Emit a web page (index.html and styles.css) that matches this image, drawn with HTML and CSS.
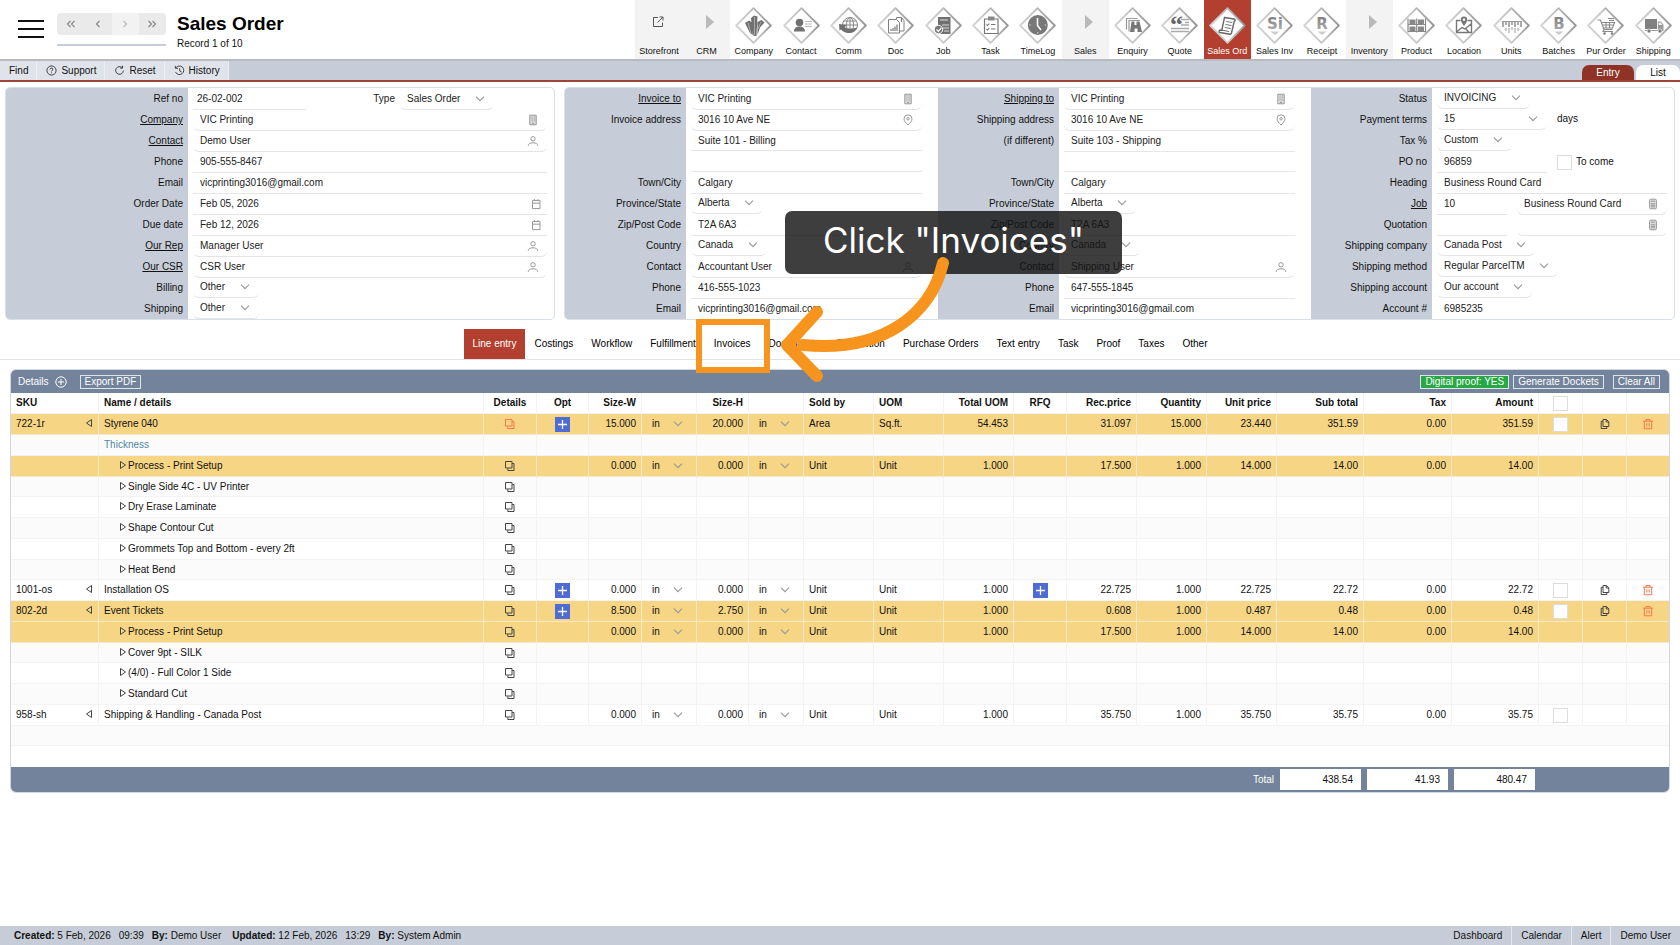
FILE: index.html
```html
<!DOCTYPE html>
<html lang="en">
<head>
<meta charset="utf-8">
<meta name="viewport" content="width=device-width, initial-scale=1">
<title>Sales Order</title>
<link rel="stylesheet" href="styles.css">
</head>
<body>
<svg class="defs" aria-hidden="true">
  <defs>
    <linearGradient id="edge" x1="0" y1="0.6" x2="1" y2="0.3"><stop offset="0" stop-color="#d4d4d4"/><stop offset="0.5" stop-color="#c2c2c2"/><stop offset="1" stop-color="#8f8f8f"/></linearGradient>
    <linearGradient id="mark" x1="0" y1="0" x2="0" y2="1"><stop offset="0" stop-color="#7a7a7a"/><stop offset="1" stop-color="#b4b4b4"/></linearGradient>
    <symbol id="diamond" viewBox="0 0 37 37"><path d="M18.5 1.2 35.8 18.5 18.5 35.8 1.2 18.5z" fill="#fff" stroke="url(#edge)" stroke-width="1.8" stroke-linejoin="round"/></symbol>
    <symbol id="building" viewBox="0 0 12 12"><path d="M2.8 1.2h6.4v9.600H2.800z" fill="#ddd" stroke="currentColor" stroke-width="1"/><path d="M4.400 3h1.200M6.600 3h1.200M4.400 5h1.200M6.600 5h1.200M4.400 7h1.200M6.600 7h1.200M5 9.400h2" stroke="currentColor" stroke-width="1"/></symbol>
    <symbol id="person" viewBox="0 0 12 12"><circle cx="6" cy="3.800" r="2.200" fill="none" stroke="currentColor"/><path d="M1.200 10.800c0-2 1.900-3 4.800-3s4.800 1 4.800 3" fill="none" stroke="currentColor"/></symbol>
    <symbol id="calendar" viewBox="0 0 12 12"><path d="M2.500 2.600h7.500v8H2.500zM2.500 5.200h7.500M4.400 1v2M8 1v2" fill="none" stroke="currentColor"/></symbol>
    <symbol id="pin" viewBox="0 0 12 12"><path d="M6 11C3.500 8.600 2 6.900 2 4.800a4 4 0 0 1 8 0C10 6.900 8.500 8.600 6 11z" fill="none" stroke="currentColor"/><circle cx="6" cy="4.800" r="1.200" fill="none" stroke="currentColor"/></symbol>
    <symbol id="clip" viewBox="0 0 12 12"><rect x="2.600" y="1.200" width="6.800" height="9.600" rx="1.200" fill="#ddd" stroke="currentColor"/><path d="M4 3.200h4M4 5.800h4M4 7.300h4M4 8.800h4" fill="none" stroke="currentColor"/></symbol>
    <symbol id="layers" viewBox="0 0 12 12"><path d="M1.500 1.500h6.500v6.500H1.500z" fill="none" stroke="currentColor" stroke-linejoin="round"/><path d="M10 3.500v7H3.800V8.500M8.200 3.500H10" fill="none" stroke="currentColor" stroke-linejoin="round"/></symbol>
    <symbol id="copy" viewBox="0 0 12 12"><path d="M4 1.500h3.500L9.800 3.800V8.500H4zM7.200 1.500V4h2.600" fill="none" stroke="currentColor" stroke-linejoin="round"/><path d="M4 3.300H2.200v7.200H7.800v-2" fill="none" stroke="currentColor" stroke-linejoin="round"/></symbol>
    <symbol id="trash" viewBox="0 0 12 12"><path d="M1 3.200h10M4 3V1.500h4V3M2.300 3.200v7.600h7.400V3.200M4.800 5.300v3.200M7.200 5.300v3.200" fill="none" stroke="currentColor" stroke-linejoin="round"/></symbol>
    <symbol id="tri-left" viewBox="0 0 8 10"><path d="M6.500 1.500v7L1.500 5z" fill="none" stroke="currentColor" stroke-linejoin="round"/></symbol>
    <symbol id="tri-right" viewBox="0 0 8 10"><path d="M1.500 1.500v7l5-3.500z" fill="none" stroke="currentColor" stroke-linejoin="round"/></symbol>
    <symbol id="plus" viewBox="0 0 15 15"><path d="M7.500 3v9M3 7.500h9" stroke="currentColor" stroke-width="1.300"/></symbol>
    <symbol id="play" viewBox="0 0 8 14"><path d="M0 0v14l8-7z" fill="#b9b9b9"/></symbol>
  </defs>
</svg>

<header class="top">
  <button class="menu" type="button" aria-label="Menu"><span></span><span></span><span></span></button>
  <div class="pager">
    <div class="pager-buttons">
      <button type="button" aria-label="First"><svg viewBox="0 0 12 10"><path d="M5.500 2 2.500 5l3 3M9.500 2l-3 3 3 3"/></svg></button>
      <button type="button" aria-label="Previous"><svg viewBox="0 0 12 10"><path d="M7.500 2l-3 3 3 3"/></svg></button>
      <button type="button" aria-label="Next" class="faded"><svg viewBox="0 0 12 10"><path d="M4.500 2l3 3-3 3"/></svg></button>
      <button type="button" aria-label="Last"><svg viewBox="0 0 12 10"><path d="M2.500 2l3 3-3 3M6.500 2l3 3-3 3"/></svg></button>
    </div>
    <div class="pager-line"></div>
  </div>
  <div class="heading"><h1>Sales Order</h1><p>Record 1 of 10</p></div>
  <nav class="modules" aria-label="Modules">
    <a href="#" class="group"><svg class="glyph" viewBox="0 0 12 12"><path d="M6 1.500H1.500v9h9V6.500M7.500 1H11v3.500M11 1 5.500 6.500" fill="none" stroke="#555"/></svg><span>Storefront</span></a>
    <a href="#" class="group"><svg class="arrow"><use href="#play"/></svg><span>CRM</span></a>
    <a href="#"><svg viewBox="0 0 37 37"><use href="#diamond"/><path d="M10 16l4-2.500 3 2L18 28l-3-2zM16 11l3-2.500 3.500 1L21.500 29h-3L16.500 16zM22.500 15l4-2 3 2.500-4.500 5L22.500 28z" fill="#707070"/><path d="M13 15.500l3 11M19.500 10v18M26 15l-3 7" stroke="#aaa" fill="none"/></svg><span>Company</span></a>
    <a href="#"><svg viewBox="0 0 37 37"><use href="#diamond"/><circle cx="16.500" cy="15.500" r="3.800" fill="#707070"/><path d="M11 24.500c0-3.500 2-4 4-5h3c2 1 4 1.500 4 5z" fill="#707070"/><path d="M22 14.500h7M22 17h7M22 19.500h7" stroke="#bbb"/></svg><span>Contact</span></a>
    <a href="#"><svg viewBox="0 0 37 37"><use href="#diamond"/><g fill="none" stroke="#888"><circle cx="20" cy="18" r="7.500"/><ellipse cx="20" cy="18" rx="3.500" ry="7.500"/><path d="M20 10.500v15M12.500 18h15M13.800 14h12.400M13.800 22h12.400"/></g><path d="M9 17l8 1-2.300 2c2.500 2.500 7.500 2.500 12.500.500-3 7-13 7-16 2l-1.700 1z" fill="#707070"/></svg><span>Comm</span></a>
    <a href="#"><svg viewBox="0 0 37 37"><use href="#diamond"/><g fill="#fff" stroke="#808080"><path d="M19.500 10.500h5l2.500 3V24h-8z"/><path d="M11.500 12.500h8l3 3V26h-11z"/></g><path d="M14 24v-2M16 24v-3M18 24v-4.500M20 24v-6.500M24.500 11v4" stroke="#777" stroke-width="1.200"/></svg><span>Doc</span></a>
    <a href="#"><svg viewBox="0 0 37 37"><use href="#diamond"/><path d="M13 10h12.500v17H13z" fill="#707070"/><path d="M15 13h8M17 18h7M18 21h6M19 24h5" stroke="#ddd"/><circle cx="13.500" cy="22.500" r="4.200" fill="#777" stroke="#fff"/><path d="M11.500 22.500l1.800 1.800 3-3.300" fill="none" stroke="#fff" stroke-width="1.200"/></svg><span>Job</span></a>
    <a href="#"><svg viewBox="0 0 37 37"><use href="#diamond"/><path d="M12.500 12h13.500v14.500H12.500z" fill="none" stroke="#777" stroke-width="1.200"/><path d="M16 9.500h6.500v4H16z" fill="#888"/><path d="M14.500 17.500l1 1 1.800-2M14.500 22l1 1 1.800-2M19 17.500h4.500M19 22h4.500" fill="none" stroke="#777" stroke-width="1.100"/></svg><span>Task</span></a>
    <a href="#"><svg viewBox="0 0 37 37"><use href="#diamond"/><circle cx="18.800" cy="18" r="10" fill="#787878"/><path d="M18.500 11v7.500l3.500 4.500" fill="none" stroke="#fff" stroke-width="1.500"/><path d="M10.300 18h1.500M25.700 18h1.500M18.800 26.500V25" stroke="#ddd"/></svg><span>TimeLog</span></a>
    <a href="#" class="group"><svg class="arrow"><use href="#play"/></svg><span>Sales</span></a>
    <a href="#"><svg viewBox="0 0 37 37"><use href="#diamond"/><path d="M12.500 22.500v-11h11M15 24.500V13.500h11" fill="none" stroke="#999" stroke-width="1.200"/><path d="M17.500 14.500h3v3.500h2v-3.500h3l2.500 10.500h-4.500v-3.500h-3V25H16z" fill="#777"/></svg><span>Enquiry</span></a>
    <a href="#"><svg viewBox="0 0 37 37"><use href="#diamond"/><text x="9" y="26" class="quote-mark">“</text><path d="M20 12.500h8M24 15.500h4M20 18h8M10 21.500h18M10 24.500h18" stroke="#aaa" stroke-width="1.300"/></svg><span>Quote</span></a>
    <a href="#" class="active"><svg viewBox="0 0 37 37"><use href="#diamond"/><path d="M15.500 10.500l9.500 1.500c1.500.3 1.500 2 .3 2.200L22.500 26c-.5 1.500-2 1.500-3 1L11 25.500c-1.500-.5-1-2.500.500-2.500l1.300.2z" fill="#fff" stroke="#666" stroke-width="1.400"/><path d="M17.300 14.500l6 1M16.500 17.500l6 1M15.700 20.500l6 1" stroke="#777" stroke-width="1.100"/><path d="M12.500 23l7.500 1.500" stroke="#666"/></svg><span>Sales Ord</span></a>
    <a href="#"><svg viewBox="0 0 37 37"><use href="#diamond"/><text x="19" y="22" class="letter">Si</text><path d="M14.500 24.500h9L19 28z" fill="#ccc"/></svg><span>Sales Inv</span></a>
    <a href="#"><svg viewBox="0 0 37 37"><use href="#diamond"/><text x="19" y="22" class="letter">R</text><path d="M14.500 24.500h9L19 28z" fill="#ccc"/></svg><span>Receipt</span></a>
    <a href="#" class="group"><svg class="arrow"><use href="#play"/></svg><span>Inventory</span></a>
    <a href="#"><svg viewBox="0 0 37 37"><use href="#diamond"/><path d="M10 11.500v14M18.700 11.500v14M27.500 11.500v14M10 17.500h17.500M10 24.500h17.500" stroke="#888" stroke-width="1.200"/><path d="M11.500 12.500h6v4.500h-6zM20 12.500h6v4.500h-6zM11.500 19.500h6v4.500h-6zM20 19.500h6v4.500h-6z" fill="#888"/></svg><span>Product</span></a>
    <a href="#"><svg viewBox="0 0 37 37"><use href="#diamond"/><path d="M15.500 13.500h-4V25.500h15V13.500h-4M12 24.500l5-4 3 1.500 6-5M21 22l3 3.500" fill="none" stroke="#777" stroke-width="1.400"/><path d="M19 19c-2.200-3-3.200-4.500-3.200-6.200a3.200 3.200 0 0 1 6.400 0c0 1.700-1 3.200-3.200 6.200z" fill="#777"/><circle cx="19" cy="12.700" r="1.200" fill="#fff"/></svg><span>Location</span></a>
    <a href="#"><svg viewBox="0 0 37 37"><use href="#diamond"/><path d="M9 14.500h20" stroke="#999"/><path d="M10 15v5M13 15v3M16 15v5M19 15v3M22 15v5M25 15v3M28 15v5" stroke="#888" stroke-width="1.400"/><path d="M13 21v3M16 21v5M19 20v3M22 21v5M25 21v3" stroke="#b0b0b0" stroke-width="1.300"/></svg><span>Units</span></a>
    <a href="#"><svg viewBox="0 0 37 37"><use href="#diamond"/><text x="19" y="22" class="letter">B</text><path d="M14.500 24.500h9L19 28z" fill="#ccc"/></svg><span>Batches</span></a>
    <a href="#"><svg viewBox="0 0 37 37"><use href="#diamond"/><path d="M10.500 13h3l3.500 9.500h8.500M14.500 15.500h13l-2 5.500h-9M17 22.500l-1 2h10M16 18h10.500M19 15.500v5.500M22.500 15.500v5.500M21 11.500h6M22 13.500h5" fill="none" stroke="#888" stroke-width="1.100"/><circle cx="17.500" cy="26.500" r="1.200" fill="#777"/><circle cx="25" cy="26.500" r="1.200" fill="#777"/></svg><span>Pur Order</span></a>
    <a href="#"><svg viewBox="0 0 37 37"><use href="#diamond"/><path d="M10 12h12v10H10z" fill="#808080"/><path d="M22.800 14.500h3.200l2.500 3.500V23h-5.700z" fill="#999"/><path d="M23.700 15.500h2l1.700 2.500h-3.700z" fill="#eee"/><path d="M10 23.500h18.500" stroke="#999"/><circle cx="14" cy="24" r="2" fill="#777" stroke="#fff" stroke-width=".6"/><circle cx="25" cy="24" r="2" fill="#777" stroke="#fff" stroke-width=".6"/></svg><span>Shipping</span></a>
  </nav>
</header>

<div class="toolbar">
  <button type="button">Find</button>
  <button type="button"><svg viewBox="0 0 12 12"><circle cx="6" cy="6" r="5"/><path d="M4.500 4.800c0-2 3-2 3-.2C7.500 5.700 6 5.700 6 7M6 8.200v1"/></svg>Support</button>
  <button type="button"><svg viewBox="0 0 12 12"><path d="M9 3a4.200 4.200 0 1 0 1.200 3.200M9.300.8V3.400H6.700"/></svg>Reset</button>
  <button type="button"><svg viewBox="0 0 12 12"><path d="M2 3.200a4.700 4.700 0 1 1-.3 4.500M1.500 1v2.600h2.800M6.200 3.500V6.500l2.200 1.200"/></svg>History</button>
  <div class="views"><a href="#" class="on">Entry</a><a href="#">List</a></div>
</div>

<main>
  <div class="panels">
    <section class="panel wide-label">
      <div class="col">
        <div class="row"><label class="name" for="ref">Ref no</label><div class="value split"><span class="line ref"><input id="ref" value="26-02-002"></span><span class="pair"><label for="type">Type</label><select id="type"><option>Sales Order</option></select></span></div></div>
        <div class="row"><a class="name" href="#" id="l-co">Company</a><div class="value"><span class="card"><input aria-labelledby="l-co" value="VIC Printing"><svg class="ic"><use href="#building"/></svg></span></div></div>
        <div class="row"><a class="name" href="#" id="l-ct">Contact</a><div class="value"><span class="card"><input aria-labelledby="l-ct" value="Demo User"><svg class="ic"><use href="#person"/></svg></span></div></div>
        <div class="row"><label class="name" for="ph">Phone</label><div class="value"><span class="line"><input id="ph" value="905-555-8467"></span></div></div>
        <div class="row"><label class="name" for="em">Email</label><div class="value"><span class="line"><input id="em" value="vicprinting3016@gmail.com"></span></div></div>
        <div class="row"><label class="name" for="od">Order Date</label><div class="value"><span class="line"><input id="od" value="Feb 05, 2026"><svg class="ic"><use href="#calendar"/></svg></span></div></div>
        <div class="row"><label class="name" for="dd">Due date</label><div class="value"><span class="line"><input id="dd" value="Feb 12, 2026"><svg class="ic"><use href="#calendar"/></svg></span></div></div>
        <div class="row"><a class="name" href="#" id="l-rep">Our Rep</a><div class="value"><span class="card"><input aria-labelledby="l-rep" value="Manager User"><svg class="ic"><use href="#person"/></svg></span></div></div>
        <div class="row"><a class="name" href="#" id="l-csr">Our CSR</a><div class="value"><span class="card"><input aria-labelledby="l-csr" value="CSR User"><svg class="ic"><use href="#person"/></svg></span></div></div>
        <div class="row"><label class="name" for="bi">Billing</label><div class="value"><select id="bi"><option>Other</option></select></div></div>
        <div class="row"><label class="name" for="sh">Shipping</label><div class="value"><select id="sh"><option>Other</option></select></div></div>
      </div>
    </section>

    <section class="panel three">
      <div class="col inset">
        <div class="row"><a class="name" href="#" id="l-inv">Invoice to</a><div class="value"><span class="card"><input aria-labelledby="l-inv" value="VIC Printing"><svg class="ic"><use href="#building"/></svg></span></div></div>
        <div class="row"><label class="name" for="ia">Invoice address</label><div class="value"><span class="card"><input id="ia" value="3016 10 Ave NE"><svg class="ic"><use href="#pin"/></svg></span></div></div>
        <div class="row"><span class="name"></span><div class="value"><span class="line"><input aria-label="Invoice address line 2" value="Suite 101 - Billing"></span></div></div>
        <div class="row"><span class="name"></span><div class="value"><span class="line"><input aria-label="Invoice address line 3"></span></div></div>
        <div class="row"><label class="name" for="ic">Town/City</label><div class="value"><span class="line"><input id="ic" value="Calgary"></span></div></div>
        <div class="row"><label class="name" for="ip">Province/State</label><div class="value"><select id="ip"><option>Alberta</option></select></div></div>
        <div class="row"><label class="name" for="iz">Zip/Post Code</label><div class="value"><span class="line"><input id="iz" value="T2A 6A3"></span></div></div>
        <div class="row"><label class="name" for="in">Country</label><div class="value"><select id="in"><option>Canada</option></select></div></div>
        <div class="row"><label class="name" for="ict">Contact</label><div class="value"><span class="card"><input id="ict" value="Accountant User"><svg class="ic"><use href="#person"/></svg></span></div></div>
        <div class="row"><label class="name" for="iph">Phone</label><div class="value"><span class="line"><input id="iph" value="416-555-1023"></span></div></div>
        <div class="row"><label class="name" for="ie">Email</label><div class="value"><span class="line"><input id="ie" value="vicprinting3016@gmail.com"></span></div></div>
      </div>
      <div class="col inset">
        <div class="row"><a class="name" href="#" id="l-shp">Shipping to</a><div class="value"><span class="card"><input aria-labelledby="l-shp" value="VIC Printing"><svg class="ic"><use href="#building"/></svg></span></div></div>
        <div class="row"><label class="name" for="sa">Shipping address</label><div class="value"><span class="card"><input id="sa" value="3016 10 Ave NE"><svg class="ic"><use href="#pin"/></svg></span></div></div>
        <div class="row"><label class="name" for="sa2">(if different)</label><div class="value"><span class="line"><input id="sa2" value="Suite 103 - Shipping"></span></div></div>
        <div class="row"><span class="name"></span><div class="value"><span class="line"><input aria-label="Shipping address line 3"></span></div></div>
        <div class="row"><label class="name" for="sc">Town/City</label><div class="value"><span class="line"><input id="sc" value="Calgary"></span></div></div>
        <div class="row"><label class="name" for="sp">Province/State</label><div class="value"><select id="sp"><option>Alberta</option></select></div></div>
        <div class="row"><label class="name" for="sz">Zip/Post Code</label><div class="value"><span class="line"><input id="sz" value="T2A 6A3"></span></div></div>
        <div class="row"><label class="name" for="sn">Country</label><div class="value"><select id="sn"><option>Canada</option></select></div></div>
        <div class="row"><label class="name" for="sct">Contact</label><div class="value"><span class="card"><input id="sct" value="Shipping User"><svg class="ic"><use href="#person"/></svg></span></div></div>
        <div class="row"><label class="name" for="sph">Phone</label><div class="value"><span class="line"><input id="sph" value="647-555-1845"></span></div></div>
        <div class="row"><label class="name" for="se">Email</label><div class="value"><span class="line"><input id="se" value="vicprinting3016@gmail.com"></span></div></div>
      </div>
      <div class="col">
        <div class="row"><label class="name" for="st">Status</label><div class="value"><select id="st"><option>INVOICING</option></select></div></div>
        <div class="row"><label class="name" for="pt">Payment terms</label><div class="value"><select id="pt" class="medium"><option>15</option></select><span class="after">days</span></div></div>
        <div class="row"><label class="name" for="tx">Tax %</label><div class="value"><select id="tx"><option>Custom</option></select></div></div>
        <div class="row"><label class="name" for="po">PO no</label><div class="value"><span class="line medium"><input id="po" value="96859"></span><label class="after tick"><input type="checkbox">To come</label></div></div>
        <div class="row"><label class="name" for="he">Heading</label><div class="value"><span class="line"><input id="he" value="Business Round Card"></span></div></div>
        <div class="row"><a class="name" href="#" id="l-job">Job</a><div class="value gap"><span class="line small"><input aria-labelledby="l-job" value="10"></span><span class="card"><input aria-label="Job name" value="Business Round Card"><svg class="ic"><use href="#clip"/></svg></span></div></div>
        <div class="row"><label class="name" for="qu">Quotation</label><div class="value gap"><span class="line small"><input id="qu"></span><span class="card"><input aria-label="Quotation name"><svg class="ic"><use href="#clip"/></svg></span></div></div>
        <div class="row"><label class="name" for="sco">Shipping company</label><div class="value"><select id="sco"><option>Canada Post</option></select></div></div>
        <div class="row"><label class="name" for="sm">Shipping method</label><div class="value"><select id="sm"><option>Regular ParcelTM</option></select></div></div>
        <div class="row"><label class="name" for="sac">Shipping account</label><div class="value"><select id="sac"><option>Our account</option></select></div></div>
        <div class="row"><label class="name" for="ac">Account #</label><div class="value"><span class="line"><input id="ac" value="6985235"></span></div></div>
      </div>
    </section>
  </div>

  <nav class="tabs" aria-label="Sections">
    <a href="#" class="on">Line entry</a><a href="#">Costings</a><a href="#">Workflow</a><a href="#">Fulfillment</a><a href="#">Invoices</a><a href="#">Documents</a><a href="#">Production</a><a href="#">Purchase Orders</a><a href="#">Text entry</a><a href="#">Task</a><a href="#">Proof</a><a href="#">Taxes</a><a href="#">Other</a>
  </nav>

  <section class="grid">
    <div class="bar">
      <span>Details</span>
      <button class="add" type="button" aria-label="Add line"><svg viewBox="0 0 12 12"><circle cx="6" cy="6" r="5.200"/><path d="M6 3v6M3 6h6"/></svg></button>
      <button class="tool" type="button">Export PDF</button>
      <button class="tool green" type="button">Digital proof: YES</button>
      <button class="tool" type="button">Generate Dockets</button>
      <button class="tool last" type="button">Clear All</button>
    </div>
    <table>
      <colgroup><col class="w88"><col><col class="w53"><col class="w52"><col class="w53"><col class="w55"><col class="w52"><col class="w55"><col class="w70"><col class="w70"><col class="w70"><col class="w53"><col class="w70"><col class="w70"><col class="w70"><col class="w87"><col class="w88"><col class="w87"><col class="w44"><col class="w44"><col class="w42"></colgroup>
      <thead><tr><th>SKU</th><th>Name / details</th><th class="c">Details</th><th class="c">Opt</th><th class="r">Size-W</th><th></th><th class="r">Size-H</th><th></th><th>Sold by</th><th>UOM</th><th class="r">Total UOM</th><th class="c">RFQ</th><th class="r">Rec.price</th><th class="r">Quantity</th><th class="r">Unit price</th><th class="r">Sub total</th><th class="r">Tax</th><th class="r">Amount</th><th class="c"><input type="checkbox" aria-label="Select all"></th><th></th><th></th></tr></thead>
      <tbody>
        <tr class="hot"><td><div class="sku">722-1r<svg class="tri"><use href="#tri-left"/></svg></div></td><td>Styrene 040</td><td class="c"><svg class="ly red"><use href="#layers"/></svg></td><td class="c"><button class="plus" type="button" aria-label="Options"><svg><use href="#plus"/></svg></button></td><td class="r">15.000</td><td class="u"><select aria-label="Width unit"><option>in</option></select></td><td class="r">20.000</td><td class="u"><select aria-label="Height unit"><option>in</option></select></td><td>Area</td><td>Sq.ft.</td><td class="r">54.453</td><td></td><td class="r">31.097</td><td class="r">15.000</td><td class="r">23.440</td><td class="r">351.59</td><td class="r">0.00</td><td class="r">351.59</td><td class="c"><input type="checkbox" aria-label="Select"></td><td class="c"><svg class="ly"><use href="#copy"/></svg></td><td class="c"><svg class="ly red"><use href="#trash"/></svg></td></tr>
        <tr><td></td><td class="sub">Thickness</td><td></td><td></td><td></td><td></td><td></td><td></td><td></td><td></td><td></td><td></td><td></td><td></td><td></td><td></td><td></td><td></td><td></td><td></td><td></td></tr>
        <tr class="hot"><td></td><td class="kid"><svg class="tri"><use href="#tri-right"/></svg>Process - Print Setup</td><td class="c"><svg class="ly"><use href="#layers"/></svg></td><td></td><td class="r">0.000</td><td class="u"><select aria-label="Width unit"><option>in</option></select></td><td class="r">0.000</td><td class="u"><select aria-label="Height unit"><option>in</option></select></td><td>Unit</td><td>Unit</td><td class="r">1.000</td><td></td><td class="r">17.500</td><td class="r">1.000</td><td class="r">14.000</td><td class="r">14.00</td><td class="r">0.00</td><td class="r">14.00</td><td></td><td></td><td></td></tr>
        <tr><td></td><td class="kid"><svg class="tri"><use href="#tri-right"/></svg>Single Side 4C - UV Printer</td><td class="c"><svg class="ly"><use href="#layers"/></svg></td><td></td><td></td><td></td><td></td><td></td><td></td><td></td><td></td><td></td><td></td><td></td><td></td><td></td><td></td><td></td><td></td><td></td><td></td></tr>
        <tr><td></td><td class="kid"><svg class="tri"><use href="#tri-right"/></svg>Dry Erase Laminate</td><td class="c"><svg class="ly"><use href="#layers"/></svg></td><td></td><td></td><td></td><td></td><td></td><td></td><td></td><td></td><td></td><td></td><td></td><td></td><td></td><td></td><td></td><td></td><td></td><td></td></tr>
        <tr><td></td><td class="kid"><svg class="tri"><use href="#tri-right"/></svg>Shape Contour Cut</td><td class="c"><svg class="ly"><use href="#layers"/></svg></td><td></td><td></td><td></td><td></td><td></td><td></td><td></td><td></td><td></td><td></td><td></td><td></td><td></td><td></td><td></td><td></td><td></td><td></td></tr>
        <tr><td></td><td class="kid"><svg class="tri"><use href="#tri-right"/></svg>Grommets Top and Bottom - every 2ft</td><td class="c"><svg class="ly"><use href="#layers"/></svg></td><td></td><td></td><td></td><td></td><td></td><td></td><td></td><td></td><td></td><td></td><td></td><td></td><td></td><td></td><td></td><td></td><td></td><td></td></tr>
        <tr><td></td><td class="kid"><svg class="tri"><use href="#tri-right"/></svg>Heat Bend</td><td class="c"><svg class="ly"><use href="#layers"/></svg></td><td></td><td></td><td></td><td></td><td></td><td></td><td></td><td></td><td></td><td></td><td></td><td></td><td></td><td></td><td></td><td></td><td></td><td></td></tr>
        <tr><td><div class="sku">1001-os<svg class="tri"><use href="#tri-left"/></svg></div></td><td>Installation OS</td><td class="c"><svg class="ly"><use href="#layers"/></svg></td><td class="c"><button class="plus" type="button" aria-label="Options"><svg><use href="#plus"/></svg></button></td><td class="r">0.000</td><td class="u"><select aria-label="Width unit"><option>in</option></select></td><td class="r">0.000</td><td class="u"><select aria-label="Height unit"><option>in</option></select></td><td>Unit</td><td>Unit</td><td class="r">1.000</td><td class="c"><button class="plus" type="button" aria-label="Request quote"><svg><use href="#plus"/></svg></button></td><td class="r">22.725</td><td class="r">1.000</td><td class="r">22.725</td><td class="r">22.72</td><td class="r">0.00</td><td class="r">22.72</td><td class="c"><input type="checkbox" aria-label="Select"></td><td class="c"><svg class="ly"><use href="#copy"/></svg></td><td class="c"><svg class="ly red"><use href="#trash"/></svg></td></tr>
        <tr class="hot"><td><div class="sku">802-2d<svg class="tri"><use href="#tri-left"/></svg></div></td><td>Event Tickets</td><td class="c"><svg class="ly"><use href="#layers"/></svg></td><td class="c"><button class="plus" type="button" aria-label="Options"><svg><use href="#plus"/></svg></button></td><td class="r">8.500</td><td class="u"><select aria-label="Width unit"><option>in</option></select></td><td class="r">2.750</td><td class="u"><select aria-label="Height unit"><option>in</option></select></td><td>Unit</td><td>Unit</td><td class="r">1.000</td><td></td><td class="r">0.608</td><td class="r">1.000</td><td class="r">0.487</td><td class="r">0.48</td><td class="r">0.00</td><td class="r">0.48</td><td class="c"><input type="checkbox" aria-label="Select"></td><td class="c"><svg class="ly"><use href="#copy"/></svg></td><td class="c"><svg class="ly red"><use href="#trash"/></svg></td></tr>
        <tr class="hot"><td></td><td class="kid"><svg class="tri"><use href="#tri-right"/></svg>Process - Print Setup</td><td class="c"><svg class="ly"><use href="#layers"/></svg></td><td></td><td class="r">0.000</td><td class="u"><select aria-label="Width unit"><option>in</option></select></td><td class="r">0.000</td><td class="u"><select aria-label="Height unit"><option>in</option></select></td><td>Unit</td><td>Unit</td><td class="r">1.000</td><td></td><td class="r">17.500</td><td class="r">1.000</td><td class="r">14.000</td><td class="r">14.00</td><td class="r">0.00</td><td class="r">14.00</td><td></td><td></td><td></td></tr>
        <tr><td></td><td class="kid"><svg class="tri"><use href="#tri-right"/></svg>Cover 9pt - SILK</td><td class="c"><svg class="ly"><use href="#layers"/></svg></td><td></td><td></td><td></td><td></td><td></td><td></td><td></td><td></td><td></td><td></td><td></td><td></td><td></td><td></td><td></td><td></td><td></td><td></td></tr>
        <tr><td></td><td class="kid"><svg class="tri"><use href="#tri-right"/></svg>(4/0) - Full Color 1 Side</td><td class="c"><svg class="ly"><use href="#layers"/></svg></td><td></td><td></td><td></td><td></td><td></td><td></td><td></td><td></td><td></td><td></td><td></td><td></td><td></td><td></td><td></td><td></td><td></td><td></td></tr>
        <tr><td></td><td class="kid"><svg class="tri"><use href="#tri-right"/></svg>Standard Cut</td><td class="c"><svg class="ly"><use href="#layers"/></svg></td><td></td><td></td><td></td><td></td><td></td><td></td><td></td><td></td><td></td><td></td><td></td><td></td><td></td><td></td><td></td><td></td><td></td><td></td></tr>
        <tr><td><div class="sku">958-sh<svg class="tri"><use href="#tri-left"/></svg></div></td><td>Shipping &amp; Handling - Canada Post</td><td class="c"><svg class="ly"><use href="#layers"/></svg></td><td></td><td class="r">0.000</td><td class="u"><select aria-label="Width unit"><option>in</option></select></td><td class="r">0.000</td><td class="u"><select aria-label="Height unit"><option>in</option></select></td><td>Unit</td><td>Unit</td><td class="r">1.000</td><td></td><td class="r">35.750</td><td class="r">1.000</td><td class="r">35.750</td><td class="r">35.75</td><td class="r">0.00</td><td class="r">35.75</td><td class="c"><input type="checkbox" aria-label="Select"></td><td></td><td></td></tr>
        <tr><td colspan="21"></td></tr>
        <tr class="end"><td colspan="21"></td></tr>
      </tbody>
    </table>
    <div class="totals"><label for="t-sub">Total</label><input id="t-sub" value="438.54" readonly><input aria-label="Tax total" value="41.93" readonly><input aria-label="Grand total" value="480.47" readonly></div>
  </section>
</main>

<footer>
  <p><b>Created:</b> 5 Feb, 2026</p><p>09:39</p><p><b>By:</b> Demo User</p><p class="wide"><b>Updated:</b> 12 Feb, 2026</p><p>13:29</p><p><b>By:</b> System Admin</p>
  <nav><a href="#">Dashboard</a><a href="#">Calendar</a><a href="#">Alert</a><a href="#">Demo User</a></nav>
</footer>

<div class="frame"></div>
<div class="callout">Click "Invoices"</div>
<svg class="pointer" viewBox="0 0 180 130"><path d="M168 11C156 62 108 101 28 93M42 60 12 93l30 31"/></svg>
</body>
</html>
```
FILE: styles.css
```css
* { box-sizing: border-box; }
body {
  margin: 0;
  min-height: 100vh;
  display: flex;
  flex-direction: column;
  position: relative;
  background: #fff;
  color: #111;
  font: 10px/12px "Liberation Sans", Arial, sans-serif;
}
button, input, select { font: inherit; color: inherit; margin: 0; padding: 0; border: 0; background: none; border-radius: 0; outline: 0; }
a { color: inherit; text-decoration: none; }
p, h1 { margin: 0; }
svg { display: block; flex: none; }
.defs { position: absolute; width: 0; height: 0; }

.top { display: flex; height: 61px; border-bottom: 2px solid #b9bbbe; }
.menu { width: 26px; height: 18px; margin: 20px 0 0 18px; display: flex; flex-direction: column; justify-content: space-between; }
.menu span { height: 2px; background: #111; }
.pager { width: 109px; margin: 13px 11px 0 13px; }
.pager-buttons { display: flex; height: 22px; border-radius: 4px; overflow: hidden; background: #eaeaea; }
.pager-buttons button { flex: 1; display: flex; align-items: center; justify-content: center; }
.pager-buttons .faded { background: #f2f2f2; }
.pager-buttons svg { width: 12px; height: 10px; fill: none; stroke: #888; stroke-width: 1.2; }
.pager-buttons .faded svg { stroke: #bbb; }
.pager-line { height: 2px; margin-top: 9px; background: #c6cdd8; }
.heading h1 { margin-top: 13px; font-size: 19px; line-height: 22px; color: #000; }
.heading p { margin-top: 3px; }

.modules { width: 62%; margin: 0 3px 0 auto; display: grid; grid-template-columns: repeat(22, 1fr); }
.modules a { display: flex; flex-direction: column; align-items: center; justify-content: space-between; padding: 7px 0 2px; font-size: 9px; white-space: nowrap; color: #111; }
.modules svg { width: 37px; height: 37px; }
.modules .group { background: #f3f3f3; }
.modules .glyph { width: 12px; height: 12px; margin: 9px 3px 0 0; }
.modules .arrow { width: 8px; height: 14px; margin: 8px 0 0 7px; }
.modules .active { background: #b23f2f; color: #fff; }
.letter { font: bold 15px "DejaVu Sans", sans-serif; fill: url(#mark); text-anchor: middle; }
.quote-mark { font: bold 26px "Liberation Serif", serif; fill: #666; }

.toolbar { display: flex; height: 21px; background: #c6cdd8; border-bottom: 2px solid #9a4638; }
.toolbar button { display: flex; align-items: center; gap: 4px; padding: 0 8px 0 9px; background: #e0e4ea; border-right: 1px solid #eceff3; }
.toolbar svg { width: 11px; height: 11px; fill: none; stroke: #333; }
.views { margin-left: auto; display: flex; gap: 2px; padding-top: 4px; }
.views a { width: 44px; text-align: center; line-height: 15px; background: #fff; border-radius: 7px 7px 0 0; }
.views .on { width: 52px; background: #8f3327; color: #fff; }

.panels { display: grid; grid-template-columns: 550fr 1111fr; gap: 9px; margin: 5px 5px 0; }
.panel { border: 1px solid #d9e0e9; border-radius: 5px; overflow: hidden; }
.three { display: grid; grid-template-columns: 373fr 373fr 363fr; }
.row { display: grid; grid-template-columns: 121px 1fr; height: 21px; }
.wide-label .row { grid-template-columns: 182px 1fr; }
.name { background: #c6cdd8; text-align: right; padding-right: 5px; line-height: 22px; white-space: nowrap; }
a.name { text-decoration: underline; }
.value { display: flex; min-width: 0; padding: 0 7px 0 5px; color: #222; }
.inset .value { padding-right: 16px; }
.value.gap { gap: 10px; }
.line, .card { flex: 1; min-width: 0; display: flex; align-items: center; padding: 0 5px 0 7px; border-bottom: 1px solid #e6e6e6; }
.card { padding-right: 8px; }
.card, .value select { border-radius: 0 0 6px 6px; border-bottom: 1px solid #e4e4e4; }
.line input, .card input { flex: 1; min-width: 0; width: 100%; height: 20px; }
.ic { width: 12px; height: 12px; color: #999; }
.ref { flex: none; width: 113px; padding: 0 4px; }
.medium { flex: none; width: 110px; }
.small { flex: none; width: 70px; }
.split { justify-content: space-between; }
.pair { display: flex; align-items: center; gap: 5px; margin-right: 53px; }
.after { margin-left: 10px; line-height: 20px; color: #111; }
.tick { display: flex; align-items: center; gap: 4px; }
select {
  appearance: none;
  height: 21px;
  padding: 0 33px 0 7px;
  background: url("data:image/svg+xml,%3Csvg xmlns='http://www.w3.org/2000/svg' viewBox='0 0 10 6'%3E%3Cpath d='M1 .7l4 4 4-4' fill='none' stroke='%23999' stroke-width='1.1'/%3E%3C/svg%3E") no-repeat right 9px center / 10px 6px;
}
input[type="checkbox"] { appearance: none; display: inline-block; vertical-align: middle; width: 15px; height: 15px; background: #fff; border: 1px solid #ddd; }

.tabs { display: flex; justify-content: center; margin-top: 9px; border-bottom: 1px solid #e2e2e2; color: #000; }
.tabs a { padding: 0 9px; line-height: 30px; }
.tabs .on { background: #b23f2f; color: #fff; }

.grid { margin: 9px 10px 0; border: 1px solid #cfd7e1; border-radius: 6px; overflow: hidden; }
.bar { display: flex; align-items: center; height: 23px; padding: 0 9px 0 7px; background: #72839b; color: #fff; }
.add { margin: 0 13px 0 6px; }
.add svg { width: 12px; height: 12px; fill: none; stroke: #fff; }
.tool { height: 14px; padding: 0 4px; line-height: 12px; border: 1px solid #dfe4ea; }
.green { margin: 0 4px 0 auto; background: #27a844; }
.last { margin-left: 9px; }
table { width: 100%; table-layout: fixed; border-collapse: separate; border-spacing: 0; }
th, td { height: 21px; padding: 0 5px; text-align: left; white-space: nowrap; border-right: 1px solid #f3f3f3; border-bottom: 1px solid #f3f3f3; }
tbody tr:nth-child(4n) td { height: 20px; }
tbody tr:nth-child(even) td { background: #fbfbfb; }
tbody tr.hot td { background: #f6d584; border-color: #f5e9c9; }
tbody .end td { border-bottom: 0; }
th:last-child, td:last-child { border-right: 0; }
.r { text-align: right; }
.c { text-align: center; }
.c svg { margin: 0 auto; }
.sub { color: #4e86a8; }
.kid { padding-left: 20px; }
.kid svg { display: inline-block; vertical-align: -1px; margin-right: 1px; }
.tri { width: 8px; height: 10px; color: #444; }
.sku { display: flex; justify-content: space-between; }
.ly { width: 12px; height: 12px; color: #444; }
.red { color: #f8764f; }
.plus { display: block; width: 15px; height: 15px; margin: 0 auto; background: #4f6bd5; color: #fff; }
.plus svg { width: 15px; height: 15px; }
.u { padding: 0; }
.u select { display: block; width: 100%; height: 19px; padding: 0 0 0 10px; background-position: right 13px center; }
.w42 { width: 42px; } .w44 { width: 44px; } .w52 { width: 52px; } .w53 { width: 53px; } .w55 { width: 55px; }
.w70 { width: 70px; } .w87 { width: 87px; } .w88 { width: 88px; }
.totals { display: flex; justify-content: flex-end; align-items: center; gap: 6px; height: 25px; padding-right: 134px; background: #72839b; color: #fff; }
.totals input { width: 81px; height: 21px; padding-right: 8px; text-align: right; background: #fff; color: #111; }

footer { margin-top: auto; display: flex; align-items: center; gap: 8px; height: 19px; padding-left: 14px; background: #c6cdd8; color: #111; }
footer .wide { margin-left: 3px; }
footer nav { margin-left: auto; display: flex; }
footer nav a { padding: 0 9px; line-height: 19px; border-left: 1px solid #e3e7ec; }
footer nav a:first-child { border-left: 0; }

.frame { position: absolute; left: 696px; top: 319px; width: 74px; height: 54px; border: 6px solid #f7941d; }
.callout { position: absolute; left: 785px; top: 211px; width: 337px; height: 63px; border-radius: 7px; background: rgba(20, 20, 20, .82); color: #fff; font: 35px/58px Inter, sans-serif; text-align: center; white-space: nowrap; }
.pointer { position: absolute; left: 775px; top: 252px; width: 180px; height: 130px; fill: none; stroke: #f7941d; stroke-width: 12px; stroke-linecap: round; stroke-linejoin: round; }
```
